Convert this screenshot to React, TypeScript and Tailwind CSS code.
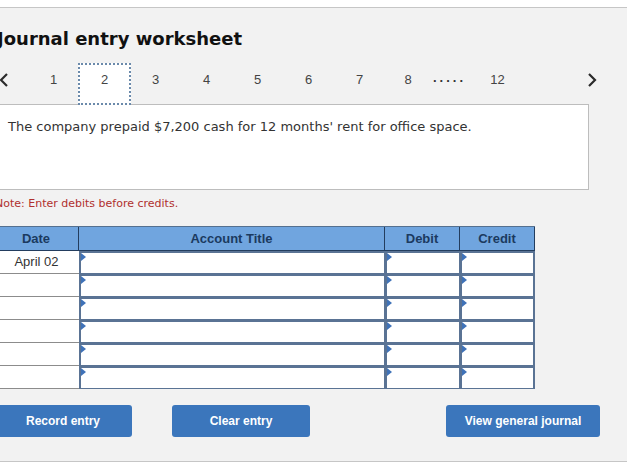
import React from 'react';

const pages = ['1', '2', '3', '4', '5', '6', '7'];

function Chevron({ dir }: { dir: 'left' | 'right' }) {
  return (
    <svg width="10" height="16" viewBox="0 0 10 16" className="block">
      <path
        d={dir === 'left' ? 'M8 2 L2 8 L8 14' : 'M2 2 L8 8 L2 14'}
        fill="none"
        stroke="#2b2b2b"
        strokeWidth="2.2"
      />
    </svg>
  );
}

function InputCell({ w, last }: { w: string; last?: boolean }) {
  return (
    <div
      className={`relative h-[23px] shrink-0 bg-white border-t-2 border-l-2 border-b border-[#5a7394] ${w} ${last ? 'border-r-2' : 'border-r'}`}
    >
      {/* the little marker in the corner */}
      <span className="absolute left-0 top-0 w-0 h-0 border-y-[4px] border-y-transparent border-l-[5px] border-l-[#3f72b8]" />
    </div>
  );
}

export default function App() {
  const rows = ['April 02', '', '', '', '', ''];

  return (
    <div className="w-[627px] h-[466px] bg-white overflow-hidden">
      <div className="mt-[7px] h-[455px] bg-[#f2f2f2] border-y border-[#c6c6c6] overflow-hidden">
        <div className="-ml-[6px] w-[640px]">
          <h1 className="pl-[3px] pt-[20px] h-[44px] text-[18px] leading-[22px] font-bold text-[#111]" style={{ fontFamily: '"DejaVu Sans", Verdana, sans-serif' }}>
            Journal entry worksheet
          </h1>

          {/* pagination */}
          <div className="relative z-10 flex items-start h-[42px] mt-[11px] text-[13px] leading-[16px] text-[#444]" style={{ fontFamily: '"Liberation Sans", Arial, sans-serif' }}>
            <div className="w-[34px] pl-[5px] mt-[9px]">
              <Chevron dir="left" />
            </div>
            {pages.map((p) =>
              p === '2' ? (
                <div key={p} className="w-[53px] -mx-px h-[42px] pt-[7px] text-center bg-white border-2 border-dotted border-[#6b8aab]">
                  {p}
                </div>
              ) : (
                <div key={p} className="w-[51px] mt-[9px] text-center">
                  {p}
                </div>
              )
            )}
            <div className="w-[46px] mt-[9px] text-center">8</div>
            <div className="w-[34px] mt-[7px] pl-[2px] font-bold tracking-[3px] text-[#333]">.....</div>
            <div className="w-[65px] mt-[9px] text-center">12</div>
            <div className="ml-[57px] mt-[9px]">
              <Chevron dir="right" />
            </div>
          </div>

          {/* question text */}
          <div className="-mt-px w-[595px] h-[86px] bg-white border border-[#bdbdbd] pl-[13px] pt-[14px]">
            <p className="text-[13px] leading-[16px] text-[#333]" style={{ fontFamily: '"DejaVu Sans", Verdana, sans-serif' }}>
              The company prepaid $7,200 cash for 12 months' rent for office space.
            </p>
          </div>

          <p className="mt-[7px] pl-[1px] text-[11px] leading-[14px] text-[#b0302e]" style={{ fontFamily: '"DejaVu Sans", Verdana, sans-serif' }}>
            Note: Enter debits before credits.
          </p>

          {/* journal table */}
          <div className="mt-[15px] w-[541px]" style={{ fontFamily: '"Liberation Sans", Arial, sans-serif' }}>
            <div className="flex h-[25px] bg-[#70a5df] border-t border-[#55708f] border-b border-b-[#233d5e] text-[13px] font-bold text-[#1b3a60]">
              <div className="w-[85px] flex items-center justify-center border-r border-[#233d5e]">Date</div>
              <div className="w-[306px] flex items-center justify-center border-r border-[#233d5e]">Account Title</div>
              <div className="w-[75px] flex items-center justify-center border-r border-[#233d5e]">Debit</div>
              <div className="w-[75px] flex items-center justify-center border-r border-[#233d5e]">Credit</div>
            </div>
            {rows.map((d, i) => (
              <div key={i} className="flex">
                <div className="w-[85px] h-[23px] shrink-0 bg-white border-b border-[#8c8c8c] flex items-center justify-center text-[13px] text-[#333]">
                  {d}
                </div>
                <InputCell w="w-[306px]" />
                <InputCell w="w-[75px]" />
                <InputCell w="w-[75px]" last />
              </div>
            ))}
          </div>

          {/* actions */}
          <div className="flex mt-[16px] text-[12px] font-bold text-white" style={{ fontFamily: '"Liberation Sans Narrow", "Liberation Sans", Arial, sans-serif' }}>
            <button className="w-[138px] h-[32px] bg-[#3b76bc] rounded-[3px]">Record entry</button>
            <button className="ml-[40px] w-[138px] h-[32px] bg-[#3b76bc] rounded-[3px]">Clear entry</button>
            <button className="ml-[136px] w-[154px] h-[32px] bg-[#3b76bc] rounded-[3px]">View general journal</button>
          </div>
        </div>
      </div>
    </div>
  );
}
